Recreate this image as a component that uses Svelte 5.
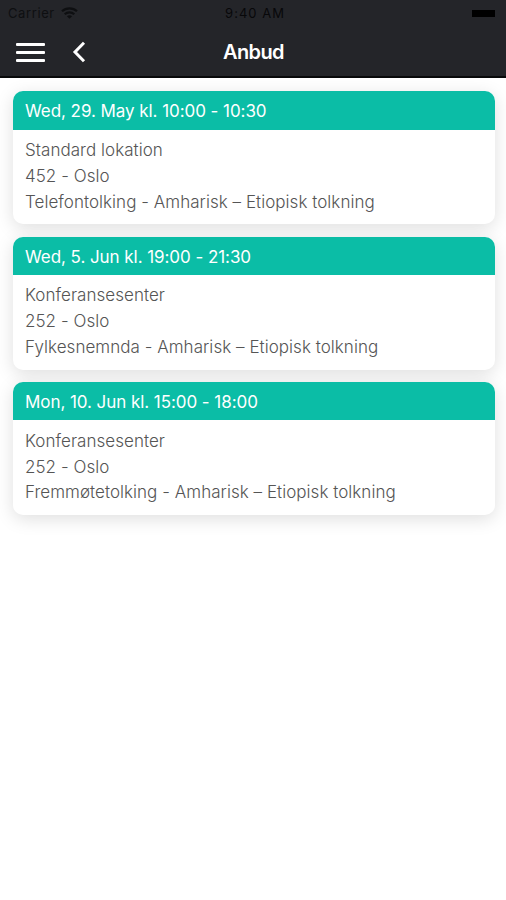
<script>
  import { onMount } from "svelte";

  let {
    title = "Anbud",
    clock = "9:40 AM",
    onMenu = () => {},
    onBack = () => {},
    onSelect = () => {},
    tenders = [
      {
        time: "Wed, 29. May kl. 10:00 - 10:30",
        place: "Standard lokation",
        address: "452 - Oslo",
        job: "Telefontolking - Amharisk – Etiopisk tolkning",
      },
      {
        time: "Wed, 5. Jun kl. 19:00 - 21:30",
        place: "Konferansesenter",
        address: "252 - Oslo",
        job: "Fylkesnemnda - Amharisk – Etiopisk tolkning",
      },
      {
        time: "Mon, 10. Jun kl. 15:00 - 18:00",
        place: "Konferansesenter",
        address: "252 - Oslo",
        job: "Fremmøtetolking - Amharisk – Etiopisk tolkning",
      },
    ],
  } = $props();

  onMount(() => {
    document.title = title;
  });
</script>

<div class="screen">
  <header>
    <div class="status">
      <div class="carrier">
        <span>Carrier</span>
        <svg width="17" height="12" viewBox="0 0 17 12" fill="none" stroke="currentColor" stroke-width="2.2">
          <path d="M1 4.3C5.2 0.3 11.8 0.3 16 4.3" />
          <path d="M3.7 7.2C6.4 4.7 10.6 4.7 13.3 7.2" />
          <path d="M8.5 11.8L5.9 9.2C7.4 7.9 9.6 7.9 11.1 9.2Z" fill="currentColor" stroke="none" />
        </svg>
      </div>
      <span class="clock">{clock}</span>
      <span class="battery"></span>
    </div>

    <nav>
      <div class="left">
        <button class="menu" aria-label="Menu" onclick={onMenu}>
          <span></span>
          <span></span>
          <span></span>
        </button>
        <button class="back" aria-label="Back" onclick={onBack}>
          <svg width="14" height="22" viewBox="0 0 14 22" fill="none" stroke="currentColor" stroke-width="3">
            <path d="M12 1.8L3 11L12 20.2" />
          </svg>
        </button>
      </div>
      <h1>{title}</h1>
    </nav>
  </header>

  <main>
    {#each tenders as tender}
      <button class="card" onclick={() => onSelect(tender)}>
        <span class="time">{tender.time}</span>
        <span class="details">
          <span>{tender.place}</span>
          <span>{tender.address}</span>
          <span>{tender.job}</span>
        </span>
      </button>
    {/each}
  </main>
</div>

<style>
  :global(body) {
    margin: 0;
    background: #fff;
  }

  .screen {
    min-height: 900px;
    background: #fff;
    font-family: Inter, "Liberation Sans", sans-serif;
  }

  header {
    box-sizing: border-box;
    height: 78px;
    background: #242529;
    border-bottom: 2px solid #08090a;
  }

  .status {
    display: grid;
    grid-template-columns: 1fr auto 1fr;
    align-items: center;
    height: 26px;
    padding: 0 11px 0 8px;
    color: #08080a;
    font-size: 13px;
    letter-spacing: 0.6px;
  }
  .carrier {
    display: flex;
    align-items: center;
    gap: 6px;
    color: #0e0f11;
  }
  .clock {
    padding-left: 7px;
    letter-spacing: 1px;
  }
  .battery {
    justify-self: end;
    width: 23px;
    height: 7px;
    background: #000;
  }

  nav {
    display: grid;
    grid-template-columns: 1fr auto 1fr;
    align-items: center;
    height: 52px;
    color: #fff;
  }
  .left {
    display: flex;
    align-items: center;
    gap: 27px;
    padding-left: 16px;
  }
  nav button {
    padding: 0;
    border: none;
    background: none;
    color: inherit;
    cursor: pointer;
  }
  .menu {
    display: flex;
    flex-direction: column;
    gap: 5px;
    width: 29px;
  }
  .menu span {
    height: 3px;
    border-radius: 1px;
    background: #fff;
  }
  .back { display: flex; }
  h1 {
    margin: 0;
    padding-left: 1px;
    font-size: 20px;
    font-weight: 600;
    letter-spacing: -0.6px;
  }

  main {
    display: flex;
    flex-direction: column;
    gap: 12.4px;
    padding: 13.3px 11.5px 0 12.5px;
  }

  .card {
    display: flex;
    flex-direction: column;
    height: 133px;
    padding: 0;
    border: none;
    border-radius: 10px;
    overflow: hidden;
    background: #fff;
    box-shadow: 0 4px 18px rgba(0, 0, 0, 0.13);
    color: #555;
    font-family: inherit;
    font-size: 17px;
    text-align: left;
    cursor: pointer;
  }
  .time {
    flex: none;
    width: 100%;
    height: 38.3px;
    box-sizing: border-box;
    padding-left: 12.5px;
    background: #0bbda6;
    color: #fff;
    font-weight: 400;
    letter-spacing: -0.06px;
    line-height: 40.4px;
  }
  .details {
    display: flex;
    flex-direction: column;
    padding: 8.4px 12.5px 0;
    font-weight: 300;
    letter-spacing: 0.04px;
    line-height: 25.8px;
  }
</style>
